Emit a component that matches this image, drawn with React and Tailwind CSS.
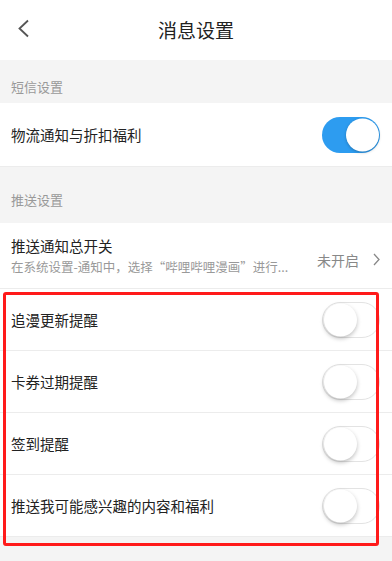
import React from "react";

const font = { fontFamily: '"Noto Sans CJK SC", "Noto Sans", sans-serif' };

// ================= TOGGLE =================
const Toggle = ({ on }) => (
  <div
    className={`relative w-[58px] h-[36px] rounded-full shrink-0 ${
      on ? "bg-[#2d9cf0]" : "bg-white border border-[#e3e3e3]"
    }`}
  >
    <div
      className={`absolute top-1/2 -translate-y-1/2 w-[33px] h-[33px] rounded-full bg-white ${
        on
          ? "right-[1px] shadow-[0_1px_3px_rgba(0,0,0,0.25)]"
          : "left-[1px] shadow-[0_2px_4px_rgba(0,0,0,0.25)]"
      }`}
    />
  </div>
);

const SwitchRow = ({ label, on }) => (
  <div className="h-[62px] flex items-center justify-between pl-[11px] pr-[12px] bg-white border-b border-[#ececec]">
    <span className="text-[14.5px] text-[#222] leading-[20px]">{label}</span>
    <Toggle on={on} />
  </div>
);

export default function App() {
  return (
    <div className="relative w-[392px] h-[561px] bg-[#f4f4f4] overflow-hidden" style={font}>
      {/* HEADER */}
      <div className="h-[60px] bg-white flex items-center relative">
        <svg className="absolute left-[17px] top-[19px]" width="13" height="19" viewBox="0 0 13 19">
          <polyline points="11,1.5 2.5,9.5 11,17.5" fill="none" stroke="#555" strokeWidth="1.8" />
        </svg>
        <div className="flex-1 text-center text-[19px] text-[#222] leading-[26px]">消息设置</div>
      </div>

      {/* SMS */}
      <div className="h-[43px] pt-[18px] pl-[11px] text-[13px] leading-[18px] text-[#999]">短信设置</div>
      <div className="h-[64px] flex items-center justify-between pl-[11px] pr-[12px] bg-white border-b border-[#ececec]">
        <span className="text-[14.5px] text-[#222] leading-[20px]">物流通知与折扣福利</span>
        <Toggle on />
      </div>

      {/* PUSH */}
      <div className="h-[56px] pt-[24px] pl-[11px] text-[13px] leading-[18px] text-[#999]">推送设置</div>
      <div className="h-[66px] flex items-center justify-between pl-[11px] pr-[12px] bg-white border-b border-[#ececec]">
        <div className="flex flex-col">
          <span className="text-[14.5px] text-[#222] leading-[20px]">推送通知总开关</span>
          <span className="text-[12.5px] text-[#999] leading-[18px] mt-[2px]">
            在系统设置-通知中，选择“哔哩哔哩漫画”进行...
          </span>
        </div>
        <div className="flex items-center gap-[14px] mt-[8px]">
          <span className="text-[14px] text-[#888] leading-[18px]">未开启</span>
          <svg width="7" height="13" viewBox="0 0 7 13">
            <polyline points="1,1 6,6.5 1,12" fill="none" stroke="#888" strokeWidth="1.3" />
          </svg>
        </div>
      </div>

      <SwitchRow label="追漫更新提醒" />
      <SwitchRow label="卡券过期提醒" />
      <SwitchRow label="签到提醒" />
      <SwitchRow label="推送我可能感兴趣的内容和福利" />

      {/* annotation box */}
      <div className="absolute left-[3px] top-[292px] w-[376px] h-[254px] border-[3px] border-[#ff1a1a] rounded-[3px] pointer-events-none" />
    </div>
  );
}
